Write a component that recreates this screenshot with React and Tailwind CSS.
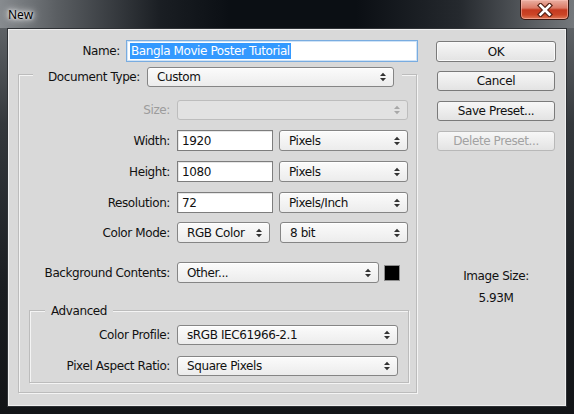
import React from "react";

const Arrows = ({ color = "#333" }) => (
  <svg width="6" height="10" viewBox="0 0 6 10" className="shrink-0">
    <path d="M0 4L3 0.8L6 4Z M0 6L3 9.2L6 6Z" fill={color} />
  </svg>
);

const Select = ({ className = "", text, disabled }) => (
  <div
    className={
      "flex items-center justify-between pl-[9px] pr-[7px] rounded-[3px] border " +
      (disabled
        ? "border-[#bdbdbd] bg-[#e2e2e2] "
        : "border-[#858585] bg-[linear-gradient(to_bottom,#fbfbfb,#ececec)] shadow-[inset_0_1px_0_#fff] ") +
      className
    }
  >
    <span className="whitespace-nowrap leading-none">{text}</span>
    <Arrows color={disabled ? "#a8a8a8" : "#333"} />
  </div>
);

const Input = ({ className = "", text }) => (
  <div
    className={
      "flex items-center pl-[4px] bg-white border border-[#7d7d7d] shadow-[inset_1px_1px_0_#e6e6e6] " +
      className
    }
  >
    <span className="leading-none">{text}</span>
  </div>
);

const Button = ({ children, className = "", disabled }) => (
  <div
    className={
      "flex items-center justify-center rounded-[3px] border bg-[linear-gradient(to_bottom,#f7f7f7,#e3e3e3)] " +
      (disabled ? "border-[#b8b8b8] text-[#a2a2a2] " : "border-[#7a7a7a] text-[#111] ") +
      className
    }
  >
    {children}
  </div>
);

export default function App() {
  return (
    <div className="w-[574px] h-[414px] flex flex-col bg-[linear-gradient(to_bottom,#6a6e72_0%,#34383c_30%,#1a1d21_70%,#121417_100%)] font-['DejaVu_Sans',sans-serif] text-[12px] tracking-[-0.4px] text-[#111] overflow-hidden">
      {/* Title bar */}
      <div className="h-[28px] shrink-0 flex justify-between items-start bg-[linear-gradient(to_right,#878b8f_0%,#5a5e62_10%,#1a1e23_28%,#0b0f14_40%,#0b0f14_62%,#25292e_80%,#5e6266_94%,#74787c_100%)]">
        <div className="pl-[8px] pt-[6px] font-['Noto_Sans',sans-serif] text-[12px] tracking-normal text-black [text-shadow:0_0_6px_#fff,0_0_10px_#fff,0_0_3px_#fff]">
          New
        </div>
        <div className="mr-[5px] w-[49px] h-[20px] rounded-b-[5px] border border-t-0 border-[#3b1710] bg-[linear-gradient(to_bottom,#eab0a3_0%,#db7a66_42%,#c53a20_52%,#cc4526_78%,#de7a58_100%)] shadow-[inset_0_0_0_1px_rgba(255,200,190,0.5)] flex items-center justify-center">
          <svg width="16" height="14" viewBox="0 0 16 14">
            <path d="M3.5 2.5L12.5 11.5M12.5 2.5L3.5 11.5" stroke="#5a2418" strokeWidth="5" strokeLinecap="square" />
            <path d="M3.5 2.5L12.5 11.5M12.5 2.5L3.5 11.5" stroke="#fff" strokeWidth="2.6" strokeLinecap="square" />
          </svg>
        </div>
      </div>

      {/* Content */}
      <div className="mx-[7px] mb-[7px] flex-1 bg-[#d9d9d9] border border-[#2e3135] shadow-[inset_0_0_0_1px_#efefef] flex pt-[11px] pl-[10px]">
        {/* Left column */}
        <div className="w-[400px] flex flex-col">
          {/* Name */}
          <div className="flex items-center h-[22px]">
            <div className="w-[102px] text-right">Name:</div>
            <div className="ml-[6px] w-[292px] h-[22px] bg-white border border-[#79ace0] shadow-[inset_0_0_0_1px_#cfe3f7] flex items-center pl-[3px]">
              <span className="bg-[#3399ff] text-white px-[1px] leading-[16px]">Bangla Movie Poster Tutorial</span>
            </div>
          </div>

          {/* Main group box */}
          <div className="mt-[12px] w-[399px] border border-[#bcbcbc] shadow-[inset_1px_1px_0_#f4f4f4,1px_1px_0_#f4f4f4] flex flex-col">
            <div className="-mt-[8px] ml-[14px] w-[369px] h-[20px] bg-[#d9d9d9] flex items-center">
              <div className="w-[107px] text-right">Document Type:</div>
              <Select className="ml-[7px] w-[247px] h-[20px]" text="Custom" />
            </div>

            <div className="mt-[13px] h-[20px] flex items-center">
              <div className="w-[151px] text-right text-[#9c9c9c]">Size:</div>
              <Select className="ml-[7px] w-[231px] h-[20px]" text="" disabled />
            </div>

            <div className="mt-[10px] h-[21px] flex items-center">
              <div className="w-[151px] text-right">Width:</div>
              <Input className="ml-[7px] w-[96px] h-[21px]" text="1920" />
              <Select className="ml-[6px] w-[129px] h-[21px]" text="Pixels" />
            </div>

            <div className="mt-[10px] h-[21px] flex items-center">
              <div className="w-[151px] text-right">Height:</div>
              <Input className="ml-[7px] w-[96px] h-[21px]" text="1080" />
              <Select className="ml-[6px] w-[129px] h-[21px]" text="Pixels" />
            </div>

            <div className="mt-[10px] h-[21px] flex items-center">
              <div className="w-[151px] text-right">Resolution:</div>
              <Input className="ml-[7px] w-[96px] h-[21px]" text="72" />
              <Select className="ml-[6px] w-[129px] h-[21px]" text="Pixels/Inch" />
            </div>

            <div className="mt-[9px] h-[21px] flex items-center">
              <div className="w-[151px] text-right">Color Mode:</div>
              <Select className="ml-[7px] w-[93px] h-[21px]" text="RGB Color" />
              <Select className="ml-[10px] w-[128px] h-[21px]" text="8 bit" />
            </div>

            <div className="mt-[19px] h-[21px] flex items-center">
              <div className="w-[151px] text-right whitespace-nowrap">Background Contents:</div>
              <Select className="ml-[7px] w-[202px] h-[21px]" text="Other..." />
              <div className="ml-[5px] w-[16px] h-[16px] bg-black border border-[#8c8c8c]" />
            </div>

            {/* Advanced group */}
            <div className="mt-[27px] ml-[10px] mb-[9px] w-[380px] border border-[#bcbcbc] shadow-[inset_1px_1px_0_#f4f4f4,1px_1px_0_#f4f4f4] flex flex-col pb-[6px]">
              <div className="-mt-[8px] ml-[15px] w-fit h-[15px] px-[6px] bg-[#d9d9d9] flex items-center">
                Advanced
              </div>
              <div className="mt-[7px] h-[20px] flex items-center">
                <div className="w-[140px] text-right">Color Profile:</div>
                <Select className="ml-[7px] w-[221px] h-[20px]" text="sRGB IEC61966-2.1" />
              </div>
              <div className="mt-[11px] h-[20px] flex items-center">
                <div className="w-[140px] text-right whitespace-nowrap">Pixel Aspect Ratio:</div>
                <Select className="ml-[7px] w-[221px] h-[20px]" text="Square Pixels" />
              </div>
            </div>
          </div>
        </div>

        {/* Right column */}
        <div className="ml-[18px] w-[120px] flex flex-col items-center">
          <Button className="mt-[1px] w-[120px] h-[21px] border-[#3a3a3a] shadow-[inset_0_0_0_1px_#fafafa]">OK</Button>
          <Button className="mt-[9px] w-[118px] h-[20px]">Cancel</Button>
          <Button className="mt-[10px] w-[118px] h-[20px]">Save Preset...</Button>
          <Button className="mt-[10px] w-[118px] h-[20px]" disabled>Delete Preset...</Button>
          <div className="mt-[118px] leading-[14px]">Image Size:</div>
          <div className="mt-[8px] leading-[14px]">5.93M</div>
        </div>
      </div>
    </div>
  );
}
